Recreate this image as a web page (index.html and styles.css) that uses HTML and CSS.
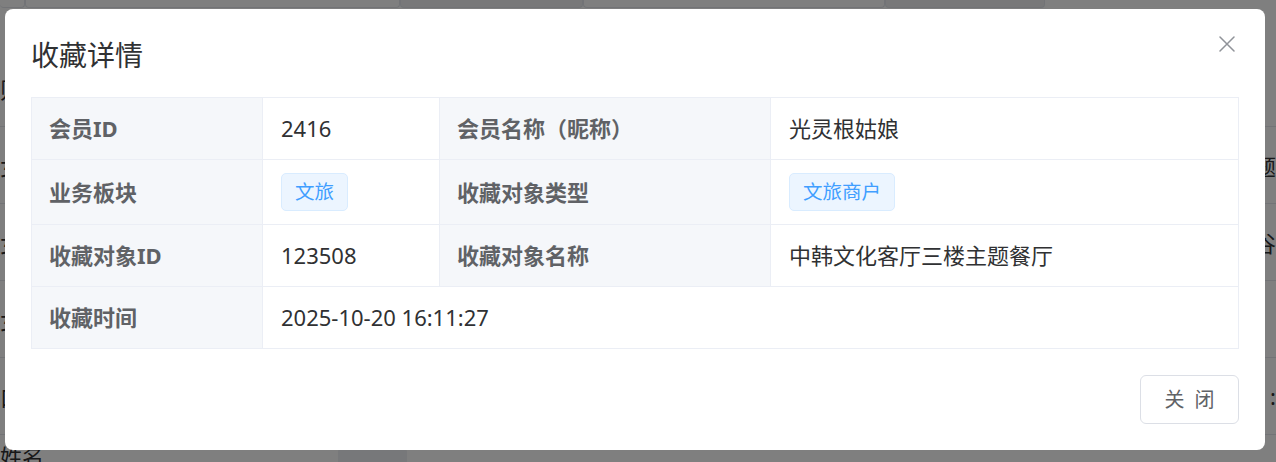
FILE: index.html
```html
<!DOCTYPE html>
<html lang="zh-CN">
<head>
<meta charset="utf-8">
<title>收藏详情</title>
<link rel="stylesheet" href="styles.css">
</head>
<body>
<div class="page">
  <div class="page-top">
    <div class="pt-box pt-a"></div>
    <div class="pt-box pt-b"></div>
    <div class="pt-box pt-c"></div>
    <div class="pt-box pt-d"></div>
    <div class="pt-box pt-e"></div>
  </div>
  <div class="page-rows">
    <div class="prow prow-first"><span class="pl">则</span><span class="pr"></span></div>
    <div class="prow"><span class="pl">女</span><span class="pr">题</span></div>
    <div class="prow"><span class="pl">女</span><span class="pr">谷</span></div>
    <div class="prow"><span class="pl">女</span><span class="pr"></span></div>
    <div class="prow"><span class="pl">口</span><span class="pr">:</span></div>
    <div class="prow prow-last"><span class="pl">姓名</span><span class="pbtn"></span></div>
  </div>
</div>

<div class="overlay">
  <div class="dialog">
    <div class="dialog-header">
      <h2 class="dialog-title">收藏详情</h2>
      <svg class="close-icon" width="16" height="16" viewBox="0 0 16 16" aria-label="关闭">
        <path d="M1 1 L15 15 M15 1 L1 15" stroke="#909399" stroke-width="1.5" fill="none" stroke-linecap="round"/>
      </svg>
    </div>
    <table class="desc">
      <colgroup>
        <col class="c1"><col class="c2"><col class="c3"><col class="c4">
      </colgroup>
      <tr>
        <th>会员ID</th>
        <td>2416</td>
        <th>会员名称（昵称）</th>
        <td>光灵根姑娘</td>
      </tr>
      <tr>
        <th>业务板块</th>
        <td><span class="tag">文旅</span></td>
        <th>收藏对象类型</th>
        <td><span class="tag">文旅商户</span></td>
      </tr>
      <tr>
        <th>收藏对象ID</th>
        <td>123508</td>
        <th>收藏对象名称</th>
        <td>中韩文化客厅三楼主题餐厅</td>
      </tr>
      <tr>
        <th>收藏时间</th>
        <td colspan="3">2025-10-20 16:11:27</td>
      </tr>
    </table>
    <div class="dialog-footer">
      <button class="btn" type="button"><span>关</span><span>闭</span></button>
    </div>
  </div>
</div>
</body>
</html>
```

FILE: styles.css
```css
* { box-sizing: border-box; }

html, body {
  margin: 0;
  padding: 0;
  width: 1276px;
  height: 462px;
  overflow: hidden;
  background: #ffffff;
  font-family: "Noto Sans", "Noto Sans CJK SC", sans-serif;
}

/* ---------- background page (under the mask) ---------- */
.page {
  width: 1276px;
  height: 462px;
  overflow: hidden;
  color: #303133;
}

.page-top {
  display: flex;
  height: 10px;
}

.pt-box {
  height: 8px;
  border: 1px solid #e4e7ed;
  border-top: none;
  border-radius: 0 0 4px 4px;
}
.pt-a { width: 25px; border-left: none; }
.pt-b { width: 375px; }
.pt-c { width: 183px; background: #f0f1f3; }
.pt-d { width: 302px; }
.pt-e { width: 160px; background: #f0f1f3; }

.page-rows {
  display: flex;
  flex-direction: column;
  padding-top: 40px;
}

.prow {
  display: flex;
  justify-content: space-between;
  align-items: center;
  height: 77px;
  border-bottom: 1px solid #e4e7ed;
  font-size: 22px;
}
.prow-last { border-bottom: none; align-items: flex-start; padding-top: 4px; }

.pl { margin-left: 0; }
.pr { margin-right: 0; }

.pbtn {
  width: 69px;
  height: 30px;
  margin-top: 8px;
  margin-right: 869px;
  background: #eef0f4;
  border-radius: 5px;
}

/* ---------- mask + dialog ---------- */
.overlay {
  position: fixed;
  inset: 0;
  background: rgba(0, 0, 0, 0.5);
}

.dialog {
  width: 1260px;
  margin: 9px 0 0 5px;
  background: #ffffff;
  border-radius: 8px;
  padding: 27px 26px 26px;
  display: flex;
  flex-direction: column;
}

.dialog-header {
  display: flex;
  justify-content: space-between;
  align-items: flex-start;
}

.dialog-title {
  margin: 0;
  font-size: 28px;
  line-height: 38px;
  font-weight: 400;
  color: #303133;
}

.close-icon {
  display: block;
  margin-right: 4px;
}

/* ---------- descriptions table ---------- */
.desc {
  margin-top: 23px;
  width: 1207px;
  border-collapse: collapse;
  table-layout: fixed;
  font-size: 22px;
  line-height: 35px;
}

.c1 { width: 231px; }
.c2 { width: 177px; }
.c3 { width: 331px; }
.c4 { width: 468px; }

.desc th,
.desc td {
  border: 1px solid #ebeef5;
  padding: 13px 17px;
  text-align: left;
  vertical-align: middle;
  white-space: nowrap;
}

.desc th {
  background: #f5f7fa;
  color: #606266;
  font-weight: 700;
}

.desc td {
  color: #303133;
  font-weight: 400;
  padding-left: 18px;
}

.tag {
  display: inline-flex;
  align-items: center;
  vertical-align: top;
  height: 38px;
  padding: 0 13px;
  background: #ecf5ff;
  border: 1px solid #d9ecff;
  border-radius: 5px;
  color: #409eff;
  font-size: 19.5px;
  line-height: 1;
}

/* ---------- footer ---------- */
.dialog-footer {
  display: flex;
  justify-content: flex-end;
  padding-top: 26px;
}

.btn {
  display: inline-flex;
  align-items: center;
  justify-content: center;
  gap: 10px;
  width: 99px;
  height: 49px;
  padding: 0;
  background: #ffffff;
  border: 1px solid #dcdfe6;
  border-radius: 6px;
  color: #606266;
  font-family: "Noto Sans", "Noto Sans CJK SC", sans-serif;
  font-size: 20px;
  line-height: 1;
}
```
